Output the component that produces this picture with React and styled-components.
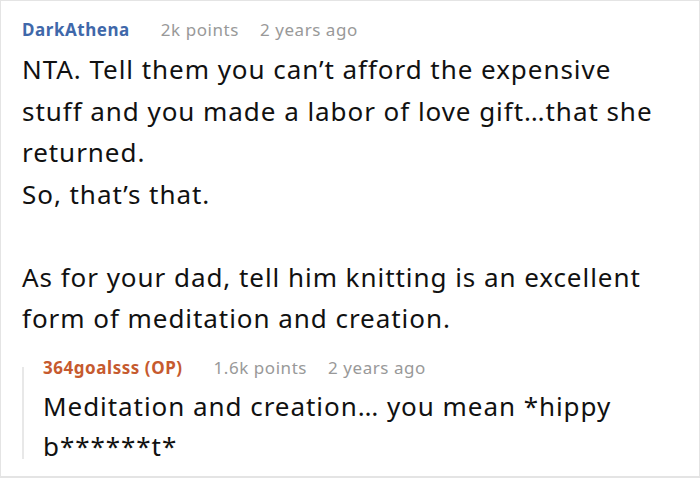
import React from "react";
import styled, { createGlobalStyle } from "styled-components";

const Global = createGlobalStyle`
  html, body { margin: 0; padding: 0; background: #fff; }
  body { font-family: "Noto Sans", "Open Sans", sans-serif; }
  * { box-sizing: border-box; }
`;

const Card = styled.div`
  width: 700px;
  height: 478px;
  border: 1px solid #e4e4e4;
  border-bottom-width: 2px;
  padding: 17px 10px 0 21px;
  overflow: hidden;
  background: #fff;
`;

const Meta = styled.div`
  display: flex;
  align-items: baseline;
  gap: 21px;
  font-size: 17px;
  letter-spacing: 0.55px;
  line-height: 24px;
  margin-bottom: ${(p) => p.$gap || 7}px;
`;

const Author = styled.span`
  font-weight: 700;
  color: ${(p) => (p.$op ? "#c65a2e" : "#3f68aa")};
  margin-right: 10px;
`;

const Info = styled.span`
  color: #999;
`;

const Body = styled.div`
  font-size: 26px;
  letter-spacing: 0.95px;
  line-height: 41.5px;
  color: #111;
  white-space: nowrap;
`;

const Reply = styled.div`
  position: relative;
  margin-top: 16px;
  padding-left: 21px;
  &::before {
    content: "";
    position: absolute;
    left: 0;
    top: 11px;
    height: 92px;
    width: 2px;
    background: #e8e8e8;
  }
`;

const ReplyBody = styled(Body)`
  line-height: 40.5px;
`;

export default function App() {
  return (
    <>
      <Global />
      <Card>
        <Meta>
          <Author>DarkAthena</Author>
          <Info>2k points</Info>
          <Info>2 years ago</Info>
        </Meta>
        <Body>
          NTA. Tell them you can’t afford the expensive
          <br />
          stuff and you made a labor of love gift…that she
          <br />
          returned.
          <br />
          So, that’s that.
          <br />
          <br />
          As for your dad, tell him knitting is an excellent
          <br />
          form of meditation and creation.
        </Body>
        <Reply>
          <Meta $gap={6}>
            <Author $op>364goalsss (OP)</Author>
            <Info>1.6k points</Info>
            <Info>2 years ago</Info>
          </Meta>
          <ReplyBody>
            Meditation and creation… you mean *hippy
            <br />
            b******t*
          </ReplyBody>
        </Reply>
      </Card>
    </>
  );
}
